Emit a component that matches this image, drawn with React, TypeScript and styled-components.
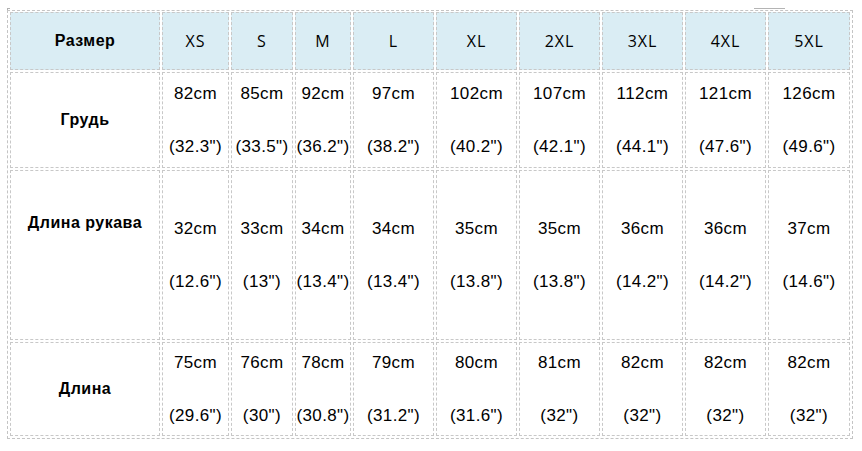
import React from "react";
import styled, { createGlobalStyle } from "styled-components";

const Global = createGlobalStyle`
  html, body { margin: 0; padding: 0; background: #ffffff; }
  body { font-family: "Liberation Sans", Arial, sans-serif; color: #000; }
`;

const Page = styled.div`
  padding: 0 0 0 7px;
  width: 862px;
  height: 451px;
  box-sizing: border-box;
`;

const Marks = styled.div`
  height: 10px;
  display: flex;
  align-items: flex-start;
`;

const CornerMark = styled.span`
  display: block;
  width: 3px;
  height: 2px;
  margin-top: 8px;
  border-top: 1px solid #b0b0b0;
  border-left: 1px solid #b0b0b0;
  box-sizing: border-box;
`;

const LineMark = styled.span`
  display: block;
  width: 31px;
  height: 1px;
  margin-top: 8px;
  margin-left: 744px;
  background: #b4b4b4;
`;

const Table = styled.div`
  box-sizing: border-box;
  width: 846px;
  border: 1px dashed #c4c4c4;
  padding: 1px 2px 2px 2px;
  display: grid;
  grid-template-columns: 150px 67px 62px 56px 81px 81px 81px 81px 81px 82px;
  grid-template-rows: 58px 96px 170px 94px;
  gap: 2px;
`;

const Cell = styled.div<{ $head?: boolean }>`
  box-sizing: border-box;
  border: 1px dashed #c8c8c8;
  background: ${(p) => (p.$head ? "#daedf4" : "#ffffff")};
  display: flex;
  align-items: center;
  justify-content: center;
  text-align: center;
`;

const HeadTitle = styled.span`
  font-family: "Liberation Sans", Arial, sans-serif;
  font-weight: bold;
  font-size: 16px;
  letter-spacing: 0.5px;
  color: #000;
`;

const SizeLabel = styled.span`
  font-family: "Open Sans", "Noto Sans", sans-serif;
  font-size: 16px;
  letter-spacing: 1px;
  color: #000;
`;

const RowLabel = styled.span<{ $lift?: number }>`
  font-family: "Liberation Sans", Arial, sans-serif;
  font-weight: bold;
  font-size: 16px;
  letter-spacing: 0.5px;
  color: #000;
  margin-bottom: ${(p) => (p.$lift ? p.$lift * 2 : 0)}px;
`;

const Values = styled.div`
  display: flex;
  flex-direction: column;
  align-items: center;
  gap: 33px;
  font-family: "Liberation Sans", Arial, sans-serif;
  font-size: 17px;
  line-height: 20px;
  letter-spacing: 0.4px;
  white-space: nowrap;
  color: #000;
`;

const sizes = ["XS", "S", "M", "L", "XL", "2XL", "3XL", "4XL", "5XL"];

const rows: { label: string; lift?: number; values: [string, string][] }[] = [
  {
    label: "Грудь",
    values: [
      ["82cm", '(32.3")'],
      ["85cm", '(33.5")'],
      ["92cm", '(36.2")'],
      ["97cm", '(38.2")'],
      ["102cm", '(40.2")'],
      ["107cm", '(42.1")'],
      ["112cm", '(44.1")'],
      ["121cm", '(47.6")'],
      ["126cm", '(49.6")'],
    ],
  },
  {
    label: "Длина рукава",
    lift: 32,
    values: [
      ["32cm", '(12.6")'],
      ["33cm", '(13")'],
      ["34cm", '(13.4")'],
      ["34cm", '(13.4")'],
      ["35cm", '(13.8")'],
      ["35cm", '(13.8")'],
      ["36cm", '(14.2")'],
      ["36cm", '(14.2")'],
      ["37cm", '(14.6")'],
    ],
  },
  {
    label: "Длина",
    values: [
      ["75cm", '(29.6")'],
      ["76cm", '(30")'],
      ["78cm", '(30.8")'],
      ["79cm", '(31.2")'],
      ["80cm", '(31.6")'],
      ["81cm", '(32")'],
      ["82cm", '(32")'],
      ["82cm", '(32")'],
      ["82cm", '(32")'],
    ],
  },
];

export default function App() {
  return (
    <Page>
      <Global />
      <Marks>
        <CornerMark />
        <LineMark />
      </Marks>
      <Table>
        <Cell $head>
          <HeadTitle>Размер</HeadTitle>
        </Cell>
        {sizes.map((s) => (
          <Cell $head key={s}>
            <SizeLabel>{s}</SizeLabel>
          </Cell>
        ))}
        {rows.map((r) => (
          <React.Fragment key={r.label}>
            <Cell>
              <RowLabel $lift={r.lift}>{r.label}</RowLabel>
            </Cell>
            {r.values.map(([cm, inch], i) => (
              <Cell key={i}>
                <Values>
                  <span>{cm}</span>
                  <span>{inch}</span>
                </Values>
              </Cell>
            ))}
          </React.Fragment>
        ))}
      </Table>
    </Page>
  );
}
